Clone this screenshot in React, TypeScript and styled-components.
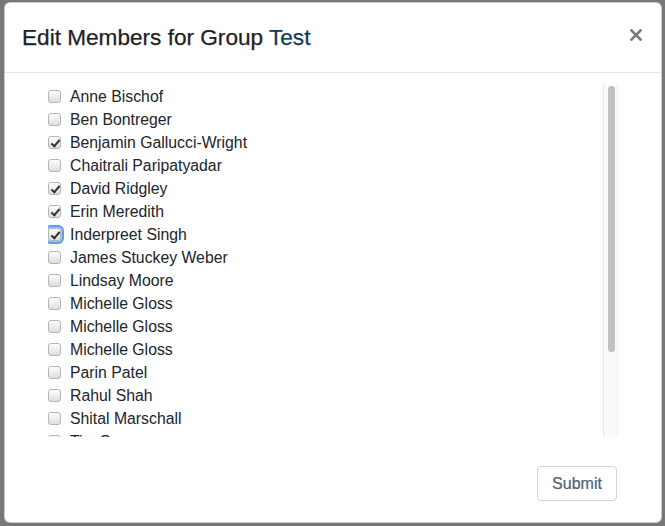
import React from "react";
import styled, { createGlobalStyle } from "styled-components";

const GlobalStyle = createGlobalStyle`
  html, body {
    margin: 0;
    padding: 0;
    height: 100%;
  }
  body {
    font-family: "Liberation Sans", Arial, sans-serif;
    color: #212529;
    background: #777;
  }
  #root {
    height: 100%;
  }
`;

interface Member {
  name: string;
  checked?: boolean;
  focused?: boolean;
}

const members: Member[] = [
  { name: "Anne Bischof" },
  { name: "Ben Bontreger" },
  { name: "Benjamin Gallucci-Wright", checked: true },
  { name: "Chaitrali Paripatyadar" },
  { name: "David Ridgley", checked: true },
  { name: "Erin Meredith", checked: true },
  { name: "Inderpreet Singh", checked: true, focused: true },
  { name: "James Stuckey Weber" },
  { name: "Lindsay Moore" },
  { name: "Michelle Gloss" },
  { name: "Michelle Gloss" },
  { name: "Michelle Gloss" },
  { name: "Parin Patel" },
  { name: "Rahul Shah" },
  { name: "Shital Marschall" },
  { name: "Tim Sorensen" },
  { name: "Tyler Brandt" },
  { name: "Victoria Lane" },
  { name: "William Chen" },
  { name: "Zach Miller" },
];

// visible viewport vs. full list height, used for the scrollbar thumb
const VIEWPORT = 352;
const ROW = 23;

const App: React.FC = () => {
  const contentHeight = members.length * ROW;
  const thumbHeight = Math.round(((VIEWPORT - 4) * VIEWPORT) / contentHeight);

  return (
    <>
      <GlobalStyle />
      <Backdrop>
        <Dialog>
          <Header>
            <Title>
              Edit Members for Group <GroupName>Test</GroupName>
            </Title>
            <CloseButton type="button" aria-label="Close">
              <svg width="12" height="12" viewBox="0 0 12 12">
                <path
                  d="M1.5 1.5 L10.5 10.5 M10.5 1.5 L1.5 10.5"
                  stroke="#7a7a7a"
                  strokeWidth="2.6"
                  strokeLinecap="square"
                />
              </svg>
            </CloseButton>
          </Header>
          <Body>
            <ListFrame>
              <MemberList>
                {members.map((m, i) => (
                  <MemberRow key={i}>
                    <Check
                      type="checkbox"
                      defaultChecked={m.checked}
                      $focused={m.focused}
                    />
                    <span>{m.name}</span>
                  </MemberRow>
                ))}
              </MemberList>
              <ScrollTrack>
                <ScrollThumb style={{ height: thumbHeight }} />
              </ScrollTrack>
            </ListFrame>
          </Body>
          <Footer>
            <SubmitButton type="button">Submit</SubmitButton>
          </Footer>
        </Dialog>
      </Backdrop>
    </>
  );
};

const Backdrop = styled.div`
  height: 100%;
  box-sizing: border-box;
  padding: 2px 3px 3px 4px;
  display: flex;
  background: #777;
`;

const Dialog = styled.div`
  flex: 1;
  display: flex;
  flex-direction: column;
  background: #fff;
  border-radius: 6px;
  border: 1px solid rgba(0, 0, 0, 0.2);
  box-sizing: border-box;
  overflow: hidden;
`;

const Header = styled.div`
  height: 69px;
  flex-shrink: 0;
  display: flex;
  align-items: center;
  justify-content: space-between;
  padding: 0 19px 0 17px;
  border-bottom: 1px solid #e5e5e5;
`;

const Title = styled.h5`
  margin: 0;
  font-size: 22.6px;
  font-weight: 500;
  line-height: 1.2;
  color: #1d2125;
  -webkit-text-stroke: 0.25px #1d2125;
`;

const GroupName = styled.span`
  color: #10385a;
  -webkit-text-stroke: 0.25px #10385a;
`;

const CloseButton = styled.button`
  border: none;
  background: transparent;
  padding: 0;
  margin-bottom: 6px;
  width: 12px;
  height: 12px;
  display: flex;
  cursor: pointer;
`;

const Body = styled.div`
  padding: 11px 43px 0 43px;
`;

const ListFrame = styled.div`
  display: flex;
  height: ${VIEWPORT + 1}px;
`;

const MemberList = styled.div`
  flex: 1;
  overflow: hidden;
  padding-top: 1px;
`;

const ScrollTrack = styled.div`
  width: 15px;
  flex-shrink: 0;
  box-sizing: border-box;
  background: #fafafa;
  border-left: 1px solid #e8e8e8;
  border-right: 1px solid #f0f0f0;
  padding: 2px 3px 0 3px;
`;

const ScrollThumb = styled.div`
  width: 7px;
  margin-left: 1px;
  border-radius: 4px;
  background: #c1c1c1;
`;

const MemberRow = styled.label`
  display: flex;
  align-items: center;
  gap: 9px;
  height: ${ROW}px;
  font-size: 15.8px;
  color: #212529;
`;

const Check = styled.input<{ $focused?: boolean }>`
  appearance: none;
  -webkit-appearance: none;
  margin: 0;
  width: 13px;
  height: 13px;
  flex-shrink: 0;
  border: 1px solid #b4b4b4;
  border-radius: 3px;
  box-sizing: border-box;
  background: linear-gradient(#fdfdfd, #dedede);
  position: relative;
  box-shadow: ${(p) =>
    p.$focused ? "0 0 0 1px #9cc2f5, 0 0 0 3px #5f9cec" : "none"};

  &:checked::after {
    content: "";
    position: absolute;
    left: 3.5px;
    top: 0.5px;
    width: 3px;
    height: 7px;
    border-right: 2px solid #333;
    border-bottom: 2px solid #333;
    transform: rotate(40deg);
  }
`;

const Footer = styled.div`
  flex: 1;
  display: flex;
  align-items: flex-start;
  justify-content: flex-end;
  padding: 29px 44px 0 0;
`;

const SubmitButton = styled.button`
  width: 80px;
  height: 35px;
  border: 1px solid #cfd4d9;
  border-radius: 4px;
  background: #fff;
  color: #4d6173;
  font-family: "Liberation Sans", Arial, sans-serif;
  font-size: 16px;
  font-weight: 500;
  -webkit-text-stroke: 0.2px #4d6173;
  cursor: pointer;
`;

export default App;
